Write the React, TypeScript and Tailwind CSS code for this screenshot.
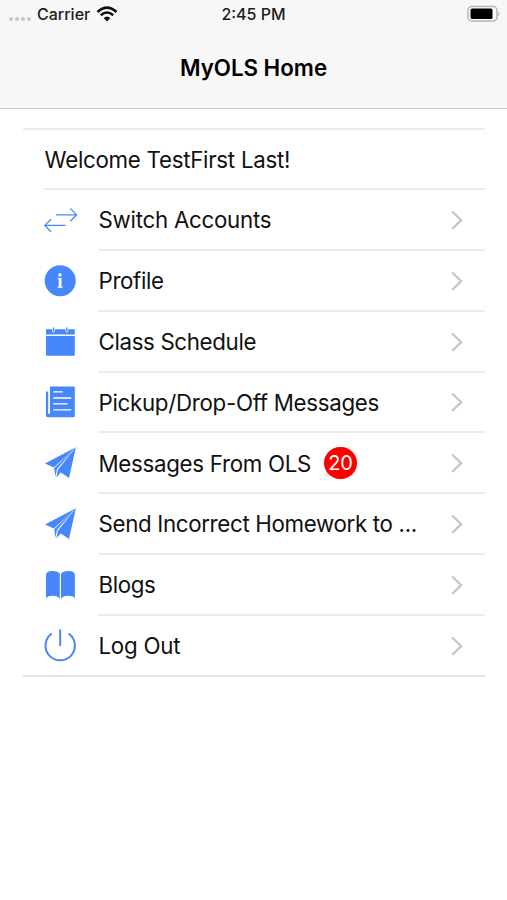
import type { ReactNode } from 'react';
import clsx from 'clsx';

function Icon({ children }: { children: ReactNode }) {
  return (
    <svg viewBox="0 0 36 36" className="mb-px h-9 w-9 shrink-0 text-[#4688fb]" fill="currentColor">
      {children}
    </svg>
  );
}

function SwitchIcon() {
  return (
    <Icon>
      <path
        d="M14 12.9H34.6M28.3 6.4L34.6 12.9L28.3 19.2M23.5 23.4H2.8M9 17.2L2.8 23.4L9 29.8"
        fill="none"
        stroke="currentColor"
        strokeWidth="1.3"
      />
    </Icon>
  );
}

function InfoIcon() {
  return (
    <Icon>
      <circle cx="18.2" cy="17.8" r="15.5" />
      <circle cx="18" cy="12" r="1.7" fill="#fff" />
      <path d="M15.9 14.9H19.5V23.4H20.5V24.7H15.7V23.4H16.8V16.2H15.9Z" fill="#fff" />
    </Icon>
  );
}

function CalendarIcon() {
  return (
    <Icon>
      <path d="M4 5.2H10.1V7.3Q11.5 10.2 12.9 7.3V5.2H23.4V7.3Q24.8 10.2 26.2 7.3V5.2H32.8V10.6H4Z" />
      <path d="M10.8 3.5H12.2V7.8H10.8ZM24.1 3.5H25.5V7.8H24.1Z" />
      <path d="M4 11.9H32.8V31Q32.8 31.8 32 31.8H4.8Q4 31.8 4 31Z" />
    </Icon>
  );
}

function PaperIcon() {
  return (
    <Icon>
      <path d="M8 2.4H32Q32.8 2.4 32.8 3.2V32Q32.8 33.3 31.5 33.3H5.8Q4 33.3 4 31.5V7.5H6.2V29.8H8Z" />
      <path
        d="M11.2 7.9H20.8M11.2 14H29.3M11.2 19.8H25.6M11.2 25.8H29.3"
        stroke="#fff"
        strokeWidth="1.3"
      />
    </Icon>
  );
}

function PlaneIcon() {
  return (
    <Icon>
      <path d="M33.9 2.3L3 18.6L11.8 22.5Z" />
      <path d="M33.9 2.3L12.2 23.2L13.4 31.7L15.1 23.8Z" />
      <path d="M33.9 2.3L15.9 24.8L14.3 32.4L18.8 27.6L27 32.9Z" />
    </Icon>
  );
}

function BookIcon() {
  return (
    <Icon>
      <path d="M4 8Q4 4 10.5 4Q16 4 17.8 6.8V31.7Q15.6 28.8 10.8 28.8Q6 28.8 4 31.2Z" />
      <path d="M32.9 8Q32.9 4 26.4 4Q20.8 4 19 6.8V31.7Q21.1 28.8 25.9 28.8Q30.8 28.8 32.9 31.2Z" />
    </Icon>
  );
}

function PowerIcon() {
  return (
    <Icon>
      <path
        d="M18.2 3.3V18.2M9.2 7A14.7 14.7 0 1 0 27.2 7"
        fill="none"
        stroke="currentColor"
        strokeWidth="2"
        strokeLinecap="round"
      />
    </Icon>
  );
}

function Chevron() {
  return (
    <svg viewBox="0 0 14 22" className="mr-[21px] ml-auto h-[22px] w-3.5 shrink-0" fill="none">
      <path d="M2.2 2.5L11.2 11.2L2.2 19.9" stroke="#c7c7cb" strokeWidth="2.3" />
    </svg>
  );
}

const items = [
  { label: 'Switch Accounts', icon: <SwitchIcon />, tracking: 'tracking-[-0.26px]' },
  { label: 'Profile', icon: <InfoIcon />, tracking: 'tracking-[-0.35px]' },
  { label: 'Class Schedule', icon: <CalendarIcon />, tracking: 'tracking-[-0.35px]' },
  { label: 'Pickup/Drop-Off Messages', icon: <PaperIcon />, tracking: 'tracking-[-0.29px]' },
  { label: 'Messages From OLS', icon: <PlaneIcon />, badge: 20, tracking: 'tracking-[-0.3px]' },
  { label: 'Send Incorrect Homework to ...', icon: <PlaneIcon />, tracking: 'tracking-[-0.33px]' },
  { label: 'Blogs', icon: <BookIcon />, tracking: 'tracking-[-0.4px]' },
  { label: 'Log Out', icon: <PowerIcon />, tracking: 'tracking-[-0.25px]' },
];

function StatusBar() {
  return (
    <div className="grid h-[28px] grid-cols-3 items-center text-[16px] font-medium text-[#1c1c1c]">
      <div className="flex items-center pl-[9px]">
        <div className="mt-[10px] flex gap-[2px]">
          {[0, 1, 2, 3].map((dot) => (
            <span key={dot} className="h-1 w-1 rounded-full bg-[#c6c6c6]" />
          ))}
        </div>
        <span className="ml-[6px]">Carrier</span>
        <svg viewBox="0 0 22 16" className="ml-[6px] h-4 w-[22px]" fill="none" stroke="#111">
          <path d="M1.5 6Q11-2.8 20.5 6" strokeWidth="2.7" />
          <path d="M4.8 9.3Q11 3.7 17.2 9.3" strokeWidth="2.5" />
          <path d="M7.6 12Q11 9 14.4 12L11 15.4Z" fill="#111" stroke="none" />
        </svg>
      </div>
      <span className="text-center whitespace-nowrap">2:45 PM</span>
      <svg viewBox="0 0 34 18" className="mr-[6px] h-[18px] w-[34px] justify-self-end">
        <rect x="1" y="1.5" width="29" height="14.5" rx="4" fill="#fff" stroke="#b4b4b4" strokeWidth="1.5" />
        <rect x="3.5" y="3.5" width="22" height="10.5" rx="1.5" fill="#000" />
        <path d="M31.3 6.5Q33.8 8.8 31.3 11Z" fill="#b4b4b4" />
      </svg>
    </div>
  );
}

export default function App() {
  return (
    <div className="h-[900px] w-[507px] overflow-hidden bg-white font-['Inter',sans-serif] text-[#111]">
      <header className="h-[109px] border-b border-[#c9c9c9] bg-[#f7f7f7]">
        <StatusBar />
        <h1 className="flex h-[80px] items-center justify-center text-[22.3px] font-semibold text-black">
          MyOLS Home
        </h1>
      </header>

      <main className="mt-[19px] mr-[22px] ml-[23px] border-t-2 border-[#ececec]">
        <div className="ml-[21px] flex h-[60.2px] items-center border-b-2 border-[#ececec] pt-px pl-[0.6px] text-[22.3px] tracking-[-0.27px]">
          Welcome TestFirst Last!
        </div>
        <ul>
          {items.map((item, i) => {
            const last = i === items.length - 1;
            return (
              <li
                key={item.label}
                className={clsx('flex h-[60.8px] pl-[19px]', last && 'border-b-2 border-[#e4e4e4]')}
              >
                <div className="flex w-14 shrink-0 items-center">{item.icon}</div>
                <div className={clsx('flex flex-1 items-center pt-px', !last && 'border-b-2 border-[#ececec]')}>
                  <span className={clsx('pl-[0.5px] text-[22.3px] whitespace-nowrap', item.tracking)}>
                    {item.label}
                  </span>
                  {item.badge && (
                    <span className="ml-[13px] flex h-8 w-[33px] items-center justify-center rounded-full bg-[#fe0000] text-[20px] tracking-[-0.2px] text-white">
                      {item.badge}
                    </span>
                  )}
                  <Chevron />
                </div>
              </li>
            );
          })}
        </ul>
      </main>
    </div>
  );
}
